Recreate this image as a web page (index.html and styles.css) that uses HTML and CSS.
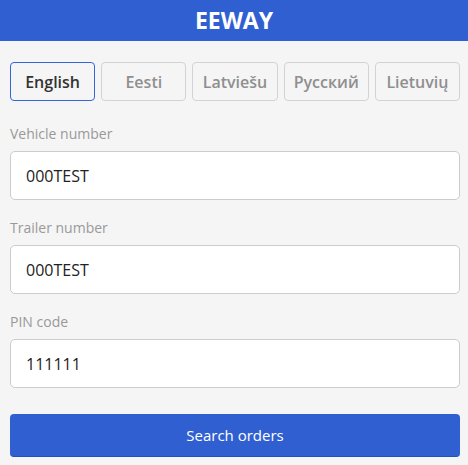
FILE: index.html
```html
<!DOCTYPE html>
<html lang="en">
<head>
<meta charset="utf-8">
<title>EEWAY</title>
<link rel="stylesheet" href="styles.css">
</head>
<body>
<header class="topbar">EEWAY</header>
<main class="content">
  <nav class="langs">
    <button class="lang active">English</button>
    <button class="lang">Eesti</button>
    <button class="lang">Latviešu</button>
    <button class="lang">Русский</button>
    <button class="lang">Lietuvių</button>
  </nav>
  <form class="search">
    <label class="field">
      <span class="field-label">Vehicle number</span>
      <input class="field-input" type="text" value="000TEST">
    </label>
    <label class="field">
      <span class="field-label">Trailer number</span>
      <input class="field-input" type="text" value="000TEST">
    </label>
    <label class="field">
      <span class="field-label">PIN code</span>
      <input class="field-input" type="text" value="111111">
    </label>
    <button class="submit" type="button">Search orders</button>
  </form>
</main>
</body>
</html>
```
FILE: styles.css
```css
* { box-sizing: border-box; }

html, body {
  margin: 0;
  padding: 0;
  background: #f5f5f5;
  font-family: "Open Sans", "Noto Sans", sans-serif;
}

.topbar {
  height: 41px;
  background: #305fd1;
  color: #fff;
  font-weight: 700;
  font-size: 23px;
  line-height: 41px;
  text-align: center;
}

.content {
  padding: 21px 8px 10px 10px;
}

.langs {
  display: flex;
  gap: 6px;
}

.lang {
  flex: 1;
  height: 39px;
  padding: 0;
  border: 1px solid #d3d3d3;
  border-radius: 4px;
  background: #f5f5f5;
  color: #8f8f8f;
  font-family: inherit;
  font-size: 16px;
  font-weight: 600;
}

.lang.active {
  border-color: #3366dd;
  color: #333;
}

.search {
  display: flex;
  flex-direction: column;
  padding-top: 22px;
}

.field {
  display: flex;
  flex-direction: column;
  margin-bottom: 17px;
}

.field-label {
  color: #999;
  font-size: 14px;
  line-height: 21px;
  margin-bottom: 7px;
}

.field-input {
  height: 49px;
  border: 1px solid #ccc;
  border-radius: 5px;
  background: #fff;
  padding: 0 15px;
  font-family: inherit;
  font-size: 16px;
  color: #222;
  outline: none;
}

.submit {
  margin-top: 9px;
  height: 43px;
  border: none;
  border-bottom: 1px solid #2450bb;
  border-radius: 4px;
  background: #305fd1;
  color: #fff;
  font-family: inherit;
  font-size: 15px;
}
```
